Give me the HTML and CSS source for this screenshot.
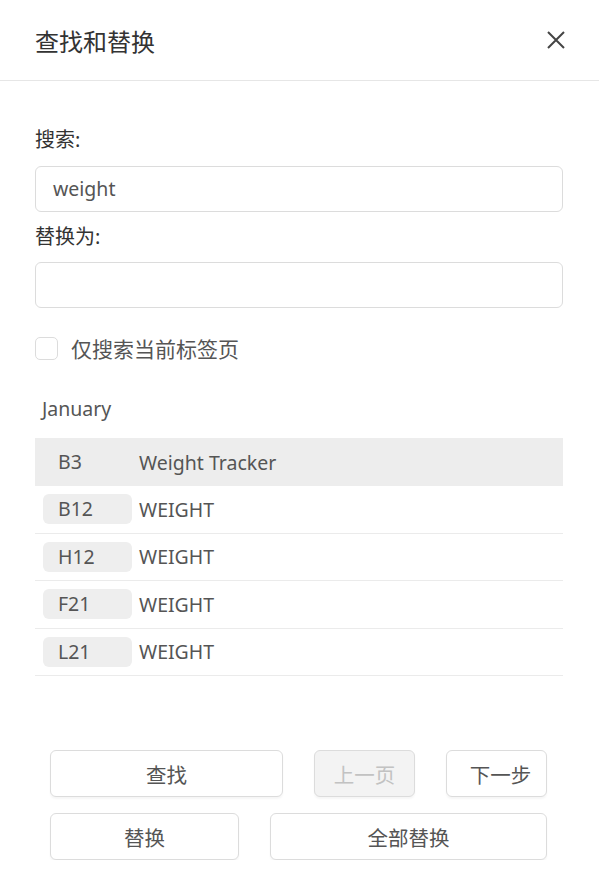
FILE: index.html
```html
<!DOCTYPE html>
<html lang="zh-CN">
<head>
  <meta charset="UTF-8">
  <meta name="viewport" content="width=device-width, initial-scale=1.0">
  <title>查找和替换</title>
  <link rel="stylesheet" href="styles.css">
</head>
<body>
  <div class="dialog">
    <header class="dialog-header">
      <h1>查找和替换</h1>
      <button class="close-btn" aria-label="关闭">
        <svg width="20" height="20" viewBox="0 0 20 20">
          <path d="M2 2 L18 18 M18 2 L2 18" stroke="#444" stroke-width="2" fill="none"/>
        </svg>
      </button>
    </header>

    <div class="dialog-body">
      <label class="field-label">搜索:</label>
      <div class="text-input">weight</div>

      <label class="field-label second">替换为:</label>
      <div class="text-input"></div>

      <div class="check-row">
        <span class="checkbox"></span>
        <span>仅搜索当前标签页</span>
      </div>

      <div class="sheet-name">January</div>

      <div class="results">
        <div class="result-row active">
          <span class="cell-ref">B3</span>
          <span class="cell-value">Weight Tracker</span>
        </div>
        <div class="result-row">
          <span class="cell-ref">B12</span>
          <span class="cell-value">WEIGHT</span>
        </div>
        <div class="result-row">
          <span class="cell-ref">H12</span>
          <span class="cell-value">WEIGHT</span>
        </div>
        <div class="result-row">
          <span class="cell-ref">F21</span>
          <span class="cell-value">WEIGHT</span>
        </div>
        <div class="result-row">
          <span class="cell-ref">L21</span>
          <span class="cell-value">WEIGHT</span>
        </div>
      </div>
    </div>

    <footer class="dialog-footer">
      <div class="btn-row">
        <button class="btn btn-find">查找</button>
        <button class="btn btn-small" disabled>上一页</button>
        <button class="btn btn-small btn-next">下一步</button>
      </div>
      <div class="btn-row">
        <button class="btn btn-replace">替换</button>
        <button class="btn btn-replace-all">全部替换</button>
      </div>
    </footer>
  </div>
</body>
</html>
```

FILE: styles.css
```css
:root {
  --text: #333;
  --muted: #555;
  --border: #dcdcdc;
  --line: #ebebeb;
  --chip: #eeeeee;
}

* {
  margin: 0;
  padding: 0;
  box-sizing: border-box;
  font-family: 'Noto Sans', 'Noto Sans CJK SC', sans-serif;
}

body {
  background-color: white;
  color: var(--text);
  width: 599px;
}

.dialog-header {
  height: 81px;
  display: flex;
  align-items: center;
  justify-content: space-between;
  padding: 0 33px 0 35px;
  border-bottom: 1px solid #e6e6e6;
}

h1 {
  font-size: 24px;
  font-weight: 400;
  color: var(--text);
}

.close-btn {
  background: none;
  border: none;
  width: 20px;
  height: 20px;
  display: flex;
  cursor: pointer;
}

.dialog-body {
  padding: 46px 36px 0 35px;
}

.field-label {
  display: block;
  font-size: 20px;
  line-height: 26px;
  margin-bottom: 13px;
}

.field-label.second {
  margin-top: 12px;
  margin-bottom: 12px;
}

.text-input {
  height: 46px;
  border: 1px solid var(--border);
  border-radius: 6px;
  padding: 0 17px;
  font-size: 19.5px;
  line-height: 44px;
  color: var(--muted);
}

.check-row {
  display: flex;
  align-items: center;
  gap: 13px;
  margin-top: 28px;
  font-size: 21px;
  color: var(--muted);
  height: 24px;
}

.checkbox {
  width: 23px;
  height: 23px;
  border: 1px solid var(--border);
  border-radius: 5px;
}

.sheet-name {
  margin-top: 36px;
  padding-left: 7px;
  font-size: 19.5px;
  line-height: 26px;
  color: var(--muted);
}

.results {
  margin-top: 16px;
}

.result-row {
  display: flex;
  align-items: center;
  height: 47.5px;
  border-bottom: 1px solid var(--line);
  font-size: 19.5px;
  color: var(--muted);
}

.result-row.active {
  background-color: #ededed;
  border-bottom: none;
  height: 48px;
}

.cell-ref {
  width: 89px;
  height: 30px;
  margin: 0 7px 0 8px;
  padding-left: 15px;
  line-height: 30px;
  border-radius: 6px;
  background-color: var(--chip);
}

.result-row.active .cell-ref {
  background-color: transparent;
}

.dialog-footer {
  padding: 74px 52px 0 50px;
  display: flex;
  flex-direction: column;
  gap: 16px;
}

.btn-row {
  display: flex;
  gap: 31px;
}

.btn {
  height: 47px;
  border: 1px solid var(--border);
  border-radius: 6px;
  background-color: white;
  font-size: 20.5px;
  color: var(--muted);
  box-shadow: 0 2px 2px rgba(0, 0, 0, 0.04);
  cursor: pointer;
}

.btn:disabled {
  background-color: #f3f3f3;
  color: #c2c2c2;
  cursor: default;
}

.btn-find {
  width: 233px;
}

.btn-small {
  width: 101px;
}

.btn-next {
  padding-left: 8px;
}

.btn-replace {
  width: 189px;
}

.btn-replace-all {
  width: 277px;
}
```
